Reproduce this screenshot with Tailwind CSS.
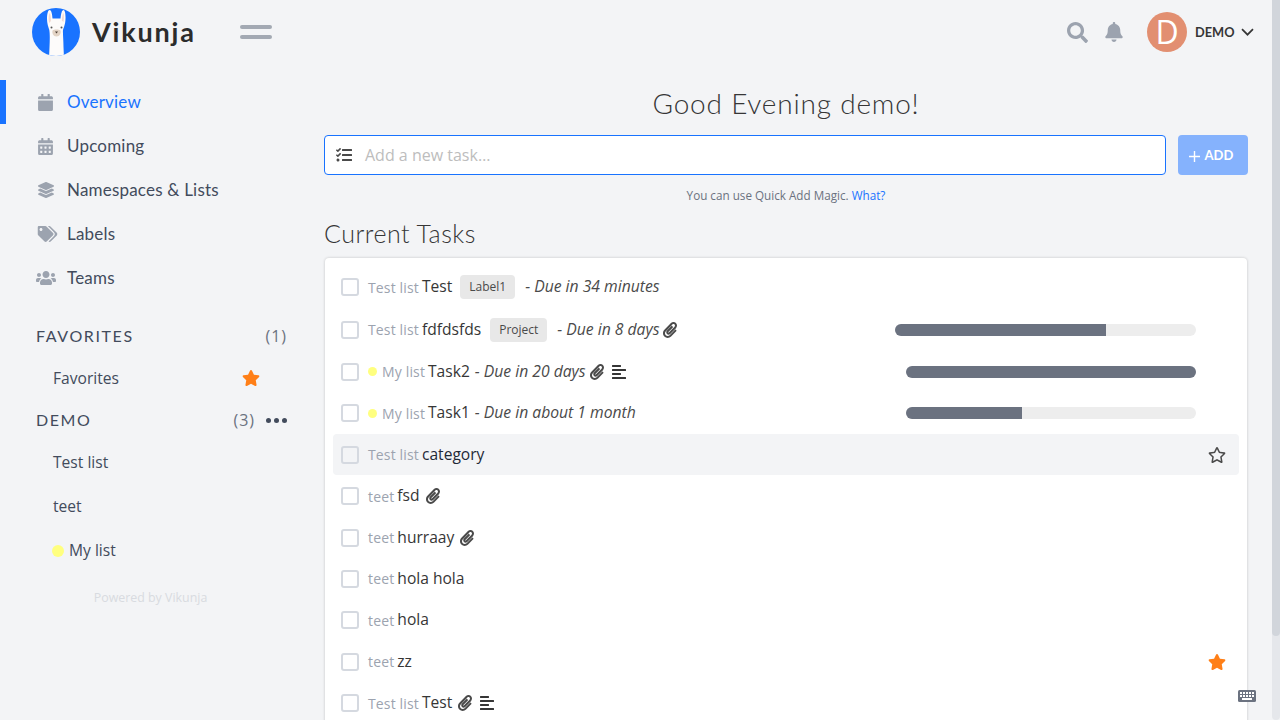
<!DOCTYPE html>
<html lang="en">
  <head>
    <meta charset="UTF-8" />
    <meta name="viewport" content="width=device-width, initial-scale=1.0" />
    <title>Overview - Vikunja</title>
    <script src="https://cdn.jsdelivr.net/npm/@tailwindcss/browser@4"></script>
  </head>
  <body class="bg-[#f3f4f6] font-['Open_Sans',sans-serif] text-[#363636] overflow-hidden">
    <div class="relative flex h-[720px] w-[1280px] overflow-hidden">
      <!-- Sidebar -->
      <aside class="w-[324px] shrink-0">
        <div class="flex h-16 items-center">
          <svg class="ml-8 h-12 w-12" viewBox="0 0 48 48">
            <defs><clipPath id="logoClip"><circle cx="24" cy="24" r="24" /></clipPath></defs>
            <circle cx="24" cy="24" r="24" fill="#1973ff" />
            <g clip-path="url(#logoClip)">
              <g transform="translate(1 0)">
                <path fill="#fdfbfa" d="M16.5 2c1.8 0 2.6 3 3 8.5h8c.6-5 1.300-8.500 3-8.500 1.900 0 2.600 7 1.600 13-.6 3-1.600 5-2.100 7-.3 3 .5 10 .5 17l.5 11H16l.5-11c.3-6 .500-13-.2-17-1-3-2.300-7-2.300-11 0-5 1-9 2.500-9z" />
                <path fill="#f0d9d3" d="M16.700 5c.8 1 1.200 4 1.200 8l-1.700 2c-.8-3-.8-8 .5-10zM30.300 5c.8 2 .8 6 .1 9l-1.600-1.500c.2-3 .7-6 1.500-7.500z" />
                <path fill="#e3d3c4" d="M19.500 22.500c2-1.200 6-1.200 8 0 .6 2.500-.6 6-4 6s-4.600-3.500-4-6z" />
                <circle cx="18.500" cy="19.500" r="1" fill="#555" />
                <circle cx="28.500" cy="19.500" r="1" fill="#555" />
                <path fill="#4a3b32" d="M22 23.500h3l-1.500 2z" />
              </g>
            </g>
          </svg>
          <span class="ml-3 font-['Lato',sans-serif] text-[27px] font-bold tracking-[1.8px] text-[#2c2c2c]">Vikunja</span>
          <button class="ml-[44px] flex h-[14px] w-8 flex-col justify-between">
            <span class="h-1 w-8 rounded-full bg-[#a3a9b3]"></span>
            <span class="h-1 w-8 rounded-full bg-[#a3a9b3]"></span>
          </button>
        </div>

        <nav class="mt-4 font-['Lato',sans-serif] text-[17px] tracking-[0.2px] text-[#424b5c]">
          <a class="flex h-11 items-center border-l-[6px] border-[#1973ff] pl-8 text-[#1973ff]">
            <span class="flex w-[29px]"><svg class="h-[17px] w-[15px] fill-[#9ca3af]" viewBox="0 0 448 512"><path d="M12 192h424c6.600 0 12 5.400 12 12v260c0 26.500-21.500 48-48 48H48c-26.500 0-48-21.500-48-48V204c0-6.600 5.400-12 12-12zm436-44v-36c0-26.500-21.500-48-48-48h-48V12c0-6.600-5.400-12-12-12h-40c-6.600 0-12 5.400-12 12v52H160V12c0-6.600-5.400-12-12-12h-40c-6.600 0-12 5.400-12 12v52H48C21.500 64 0 85.500 0 112v36c0 6.600 5.400 12 12 12h424c6.600 0 12-5.400 12-12z" /></svg></span>
            Overview
          </a>
          <a class="flex h-11 items-center pl-[38px]">
            <span class="flex w-[29px]"><svg class="h-[17px] w-[15px] fill-[#9ca3af]" viewBox="0 0 448 512"><path d="M0 464c0 26.500 21.500 48 48 48h352c26.500 0 48-21.500 48-48V192H0v272zm320-196c0-6.600 5.400-12 12-12h40c6.600 0 12 5.400 12 12v40c0 6.600-5.400 12-12 12h-40c-6.600 0-12-5.400-12-12v-40zm0 128c0-6.600 5.400-12 12-12h40c6.600 0 12 5.400 12 12v40c0 6.600-5.400 12-12 12h-40c-6.600 0-12-5.400-12-12v-40zM192 268c0-6.600 5.400-12 12-12h40c6.600 0 12 5.400 12 12v40c0 6.600-5.400 12-12 12h-40c-6.600 0-12-5.400-12-12v-40zm0 128c0-6.600 5.400-12 12-12h40c6.600 0 12 5.400 12 12v40c0 6.600-5.400 12-12 12h-40c-6.600 0-12-5.400-12-12v-40zM64 268c0-6.600 5.400-12 12-12h40c6.600 0 12 5.400 12 12v40c0 6.600-5.400 12-12 12H76c-6.600 0-12-5.400-12-12v-40zm0 128c0-6.600 5.400-12 12-12h40c6.600 0 12 5.400 12 12v40c0 6.600-5.400 12-12 12H76c-6.600 0-12-5.400-12-12v-40zM400 64h-48V16c0-8.800-7.200-16-16-16h-32c-8.800 0-16 7.200-16 16v48H160V16c0-8.800-7.200-16-16-16h-32c-8.800 0-16 7.200-16 16v48H48C21.500 64 0 85.500 0 112v48h448v-48c0-26.500-21.500-48-48-48z" /></svg></span>
            Upcoming
          </a>
          <a class="flex h-11 items-center pl-[38px]">
            <span class="flex w-[29px]"><svg class="h-4 w-4 fill-[#9ca3af]" viewBox="0 0 512 512"><path d="M12.410 148.020l232.940 105.670c6.800 3.090 14.490 3.090 21.290 0l232.940-105.670c16.550-7.510 16.550-32.520 0-40.030L266.650 2.310a25.607 25.607 0 0 0-21.290 0L12.410 107.980c-16.550 7.510-16.550 32.530 0 40.040zm487.180 88.280l-58.090-26.330-161.640 73.270c-7.560 3.430-15.590 5.170-23.860 5.170s-16.290-1.740-23.860-5.170L70.510 209.970l-58.100 26.330c-16.550 7.500-16.550 32.500 0 40l232.940 105.590c6.800 3.080 14.490 3.080 21.290 0L499.590 276.300c16.550-7.500 16.550-32.500 0-40zm0 127.800l-57.870-26.230-161.860 73.370c-7.560 3.430-15.590 5.170-23.860 5.170s-16.290-1.740-23.860-5.170L70.290 337.870 12.410 364.100c-16.550 7.500-16.550 32.500 0 40l232.940 105.590c6.800 3.080 14.490 3.080 21.290 0L499.590 404.100c16.550-7.500 16.550-32.500 0-40z" /></svg></span>
            Namespaces &amp; Lists
          </a>
          <a class="flex h-11 items-center pl-[38px]">
            <span class="flex w-[29px]"><svg class="h-4 w-5 -translate-x-[0.5px] fill-[#9ca3af]" viewBox="0 0 640 512"><path d="M497.941 225.941L286.059 14.059A48 48 0 0 0 252.118 0H48C21.490 0 0 21.490 0 48v204.118a48 48 0 0 0 14.059 33.941l211.882 211.882c18.744 18.745 49.136 18.746 67.882 0l204.118-204.118c18.745-18.745 18.745-49.137 0-67.882zM112 160c-26.510 0-48-21.490-48-48s21.490-48 48-48 48 21.490 48 48-21.490 48-48 48zm513.941 133.823L421.823 497.941c-18.745 18.745-49.137 18.745-67.882 0l-.360-.360L527.640 323.522c16.999-16.999 26.360-39.600 26.360-63.640s-9.362-46.641-26.360-63.640L331.397 0h48.721a48 48 0 0 1 33.941 14.059l211.882 211.882c18.745 18.745 18.745 49.137 0 67.882z" /></svg></span>
            Labels
          </a>
          <a class="flex h-11 items-center pl-[36px]">
            <span class="flex w-[31px]"><svg class="h-4 w-5 fill-[#9ca3af]" viewBox="0 0 640 512"><path d="M96 224c35.300 0 64-28.700 64-64s-28.700-64-64-64-64 28.700-64 64 28.700 64 64 64zm448 0c35.300 0 64-28.700 64-64s-28.700-64-64-64-64 28.700-64 64 28.700 64 64 64zm32 32h-64c-17.600 0-33.500 7.100-45.100 18.600 40.300 22.100 68.900 62 75.100 109.400h66c17.700 0 32-14.300 32-32v-32c0-35.300-28.700-64-64-64zm-256 0c61.900 0 112-50.100 112-112S381.900 32 320 32 208 82.100 208 144s50.100 112 112 112zm76.800 32h-8.300c-20.800 10-43.900 16-68.500 16s-47.600-6-68.500-16h-8.300C179.600 288 128 339.600 128 403.200V432c0 26.500 21.500 48 48 48h288c26.500 0 48-21.500 48-48v-28.800c0-63.600-51.600-115.200-115.200-115.200zm-223.700-13.400C161.500 263.100 145.600 256 128 256H64c-35.300 0-64 28.700-64 64v32c0 17.700 14.300 32 32 32h65.900c6.300-47.400 34.900-87.300 75.200-109.400z" /></svg></span>
            Teams
          </a>
        </nav>

        <div class="mt-[14px] w-[300px] pl-9 pr-[13px] text-[15.6px] text-[#424b5c]">
          <div class="flex h-11 items-center justify-between">
            <span class="font-['Lato',sans-serif] text-[16px] tracking-[1.6px]">FAVORITES</span>
            <span class="text-[16px] tracking-[1px] text-[#6b7280]">(1)</span>
          </div>
          <div class="flex h-10 items-center justify-between pl-[17px] pr-[27px]">
            <span class="mt-[2px]">Favorites</span>
            <svg class="h-4 w-[18px] fill-[#ff7f17]" viewBox="0 0 576 512"><path d="M259.300 17.800L194 150.200 47.900 171.500c-26.200 3.800-36.700 36.100-17.700 54.600l105.700 103-25 145.500c-4.500 26.300 23.200 46 46.400 33.700L288 439.600l130.700 68.700c23.200 12.200 50.900-7.400 46.400-33.700l-25-145.500 105.700-103c19-18.500 8.500-50.800-17.700-54.600L382 150.200 316.700 17.800c-11.700-23.600-45.600-23.900-57.400 0z" /></svg>
          </div>
          <div class="flex h-[42px] items-center justify-between pt-[2px]">
            <span class="font-['Lato',sans-serif] text-[16px] tracking-[1.6px]">DEMO</span>
            <span class="flex items-center gap-[11px]">
              <span class="text-[16px] tracking-[1px] text-[#6b7280]">(3)</span>
              <span class="flex gap-[3px]">
                <i class="h-[5px] w-[5px] rounded-full bg-[#424b5c]"></i>
                <i class="h-[5px] w-[5px] rounded-full bg-[#424b5c]"></i>
                <i class="h-[5px] w-[5px] rounded-full bg-[#424b5c]"></i>
              </span>
            </span>
          </div>
          <div class="flex h-11 items-center pt-[2px] pl-[17px]">Test list</div>
          <div class="flex h-11 items-center pt-[2px] pl-[17px]">teet</div>
          <div class="flex h-11 items-center pt-[2px] pl-4">
            <i class="mr-[5px] h-3 w-3 rounded-full bg-[#ffff7f]"></i>My list
          </div>
          <p class="mt-[17px] pr-[22px] text-center text-[12.400px] text-[#d8dbe0]">Powered by Vikunja</p>
        </div>
      </aside>

      <!-- Main -->
      <main class="w-[924px] shrink-0">
        <div class="-mr-8 flex h-16 items-center justify-end">
          <svg class="mr-[17px] h-[21px] w-[21px] fill-[#9ca3af]" viewBox="0 0 512 512"><path d="M505 442.700L405.300 343c-4.500-4.500-10.600-7-17-7H372c27.600-35.300 44-79.700 44-128C416 93.100 322.900 0 208 0S0 93.100 0 208s93.100 208 208 208c48.300 0 92.700-16.400 128-44v16.300c0 6.400 2.500 12.500 7 17l99.700 99.700c9.400 9.400 24.600 9.400 33.900 0l28.300-28.300c9.400-9.400 9.400-24.600.1-34zM208 336c-70.700 0-128-57.200-128-128 0-70.700 57.200-128 128-128 70.700 0 128 57.200 128 128 0 70.700-57.200 128-128 128z" /></svg>
          <svg class="mr-[24px] h-[20px] w-[18px] fill-[#9ca3af]" viewBox="0 0 448 512"><path d="M224 512c35.320 0 63.970-28.650 63.970-64H160.030c0 35.350 28.650 64 63.970 64zm215.390-149.710c-19.320-20.760-55.470-51.990-55.470-154.290 0-77.700-54.480-139.900-127.940-155.160V32c0-17.670-14.320-32-31.980-32s-31.980 14.330-31.980 32v20.840C118.560 68.100 64.080 130.300 64.080 208c0 102.300-36.150 133.530-55.470 154.290-6 6.450-8.660 14.160-8.610 21.710.11 16.400 12.980 32 32.100 32h383.800c19.120 0 32-15.600 32.100-32 .05-7.550-2.610-15.270-8.610-21.710z" /></svg>
          <div class="flex h-10 w-10 items-center justify-center rounded-full bg-[#e28f71] font-['Open_Sans',sans-serif] text-[32px] leading-none text-white">D</div>
          <span class="mt-[2px] ml-2 w-[39px] font-['Lato',sans-serif] text-[12.800px] font-bold text-[#363636]">DEMO</span>
          <svg class="ml-[7px] h-[8px] w-[13px] fill-none stroke-[#363636] stroke-[1.700]" viewBox="0 0 13 8"><path d="M1 1.200l5.500 5.500 5.500-5.500" /></svg>
          <span class="w-[26px]"></span>
        </div>

        <div class="w-[924px]">
          <h2 class="mt-[23px] text-center font-['Lato',sans-serif] text-[28px] leading-8 font-light tracking-[0.8px] text-[#363636]">Good Evening demo!</h2>
          <div class="mt-4 flex gap-3">
            <div class="flex h-10 flex-1 items-center rounded border border-[#1973ff] bg-white">
              <svg class="ml-[11px] h-4 w-4 fill-[#4a4a4a]" viewBox="0 0 512 512"><path d="M139.610 35.500a12 12 0 0 0-17 0L58.930 98.810l-22.700-22.120a12 12 0 0 0-17 0L3.530 92.410a12 12 0 0 0 0 17l47.590 47.400a12.780 12.780 0 0 0 17.610 0l15.590-15.620L156.520 69a12.090 12.090 0 0 0 .09-17zm0 159.190a12 12 0 0 0-17 0l-63.680 63.720-22.700-22.100a12 12 0 0 0-17 0L3.530 252a12 12 0 0 0 0 17L51 316.500a12.770 12.770 0 0 0 17.600 0l15.700-15.690 72.200-72.220a12 12 0 0 0 .09-16.900zM64 368c-26.490 0-48.590 21.500-48.590 48S37.530 464 64 464a48 48 0 0 0 0-96zm432 16H208a16 16 0 0 0-16 16v32a16 16 0 0 0 16 16h288a16 16 0 0 0 16-16v-32a16 16 0 0 0-16-16zm0-320H208a16 16 0 0 0-16 16v32a16 16 0 0 0 16 16h288a16 16 0 0 0 16-16V80a16 16 0 0 0-16-16zm0 160H208a16 16 0 0 0-16 16v32a16 16 0 0 0 16 16h288a16 16 0 0 0 16-16v-32a16 16 0 0 0-16-16z" /></svg>
              <span class="ml-[13px] text-[16px] text-[#bdbdbd]">Add a new task…</span>
            </div>
            <button class="flex h-10 w-[70px] items-center justify-center rounded bg-[#85b2fd] pt-[2px] pr-1 font-['Lato',sans-serif] text-[13px] font-bold text-white">
              <svg class="mr-[5px] h-[11px] w-[11px] stroke-white stroke-[1.400]" viewBox="0 0 11 11"><path d="M5.500 0v11M0 5.500h11" /></svg>ADD
            </button>
          </div>
          <p class="mt-3 text-center text-[11.700px] leading-[17px] text-[#6b7280]">You can use Quick Add Magic. <span class="text-[#1973ff]">What?</span></p>

          <h3 class="mt-[13px] font-['Lato',sans-serif] text-[25px] leading-8 font-light tracking-[0.5px] text-[#363636]">Current Tasks</h3>

          <div class="mx-px mt-[9px] h-[470px] rounded-t bg-white px-2 pt-2 text-[15.600px] shadow-[0_0_3px_rgba(0,0,0,0.2)]">
            <div class="flex h-[42px] items-center pl-2">
              <i class="mr-[9px] h-[18px] w-[18px] rounded-[3px] border-2 border-[#d5d9e0]"></i>
              <span class="mr-[3px] text-[14px] tracking-[0.15px] text-[#9ca3af]">Test list</span>Test
              <span class="ml-2 rounded bg-[#e8e8e8] px-[9px] py-[3px] text-[12px] leading-[18px] text-[#4a4a4a]">Label1</span>
              <em class="ml-[10px] text-[15.700px] text-[#4a4a4a]">- Due in 34 minutes</em>
            </div>
            <div class="flex h-[43px] items-center pl-2">
              <i class="mr-[9px] h-[18px] w-[18px] rounded-[3px] border-2 border-[#d5d9e0]"></i>
              <span class="mr-[3px] text-[14px] tracking-[0.15px] text-[#9ca3af]">Test list</span>fdfdsfds
              <span class="ml-[9px] rounded bg-[#e8e8e8] px-[9px] py-[3px] text-[12px] leading-[18px] text-[#4a4a4a]">Project</span>
              <em class="ml-[10px] text-[15.700px] text-[#4a4a4a]">- Due in 8 days</em>
              <svg class="ml-1 h-4 w-[14px] fill-[#4a4a4a]" viewBox="0 0 448 512"><path d="M43.246 466.142c-58.430-60.289-57.341-157.511 1.386-217.581L254.392 34c44.316-45.332 116.351-45.336 160.671 0 43.890 44.894 43.943 117.329 0 162.276L232.214 383.128c-29.855 30.537-78.633 30.111-107.982-.998-28.275-29.970-27.368-77.473 1.452-106.953l143.743-146.835c6.182-6.314 16.312-6.422 22.626-.241l22.861 22.379c6.315 6.182 6.422 16.312.241 22.626L171.427 319.927c-4.932 5.045-5.236 13.428-.648 18.292 4.372 4.634 11.245 4.711 15.688.165l182.849-186.851c19.613-20.062 19.613-52.725-.011-72.798-19.189-19.627-49.957-19.637-69.154 0L90.390 293.295c-34.763 35.560-35.299 93.120-1.191 128.313 34.010 35.093 88.985 35.137 123.058.286l172.060-175.999c6.177-6.319 16.307-6.433 22.626-.256l22.877 22.364c6.319 6.177 6.434 16.307.256 22.626l-172.060 175.998c-59.576 60.938-155.943 60.216-214.770-.485z" /></svg>
              <div class="mr-[43px] ml-auto h-3 w-[301px] overflow-hidden rounded-full bg-[#ededed]"><div class="h-full bg-[#6b7280]" style="width: 70%"></div></div>
            </div>
            <div class="flex h-[41px] items-center pl-2">
              <i class="mr-[9px] h-[18px] w-[18px] rounded-[3px] border-2 border-[#d5d9e0]"></i>
              <i class="mr-[5px] h-[9px] w-[9px] rounded-full bg-[#ffff7f]"></i>
              <span class="mr-[3px] text-[14px] tracking-[0.15px] text-[#9ca3af]">My list</span>Task2
              <em class="ml-[5px] text-[15.700px] text-[#4a4a4a]">- Due in 20 days</em>
              <svg class="ml-1 h-4 w-[14px] fill-[#4a4a4a]" viewBox="0 0 448 512"><path d="M43.246 466.142c-58.430-60.289-57.341-157.511 1.386-217.581L254.392 34c44.316-45.332 116.351-45.336 160.671 0 43.890 44.894 43.943 117.329 0 162.276L232.214 383.128c-29.855 30.537-78.633 30.111-107.982-.998-28.275-29.970-27.368-77.473 1.452-106.953l143.743-146.835c6.182-6.314 16.312-6.422 22.626-.241l22.861 22.379c6.315 6.182 6.422 16.312.241 22.626L171.427 319.927c-4.932 5.045-5.236 13.428-.648 18.292 4.372 4.634 11.245 4.711 15.688.165l182.849-186.851c19.613-20.062 19.613-52.725-.011-72.798-19.189-19.627-49.957-19.637-69.154 0L90.390 293.295c-34.763 35.560-35.299 93.120-1.191 128.313 34.010 35.093 88.985 35.137 123.058.286l172.060-175.999c6.177-6.319 16.307-6.433 22.626-.256l22.877 22.364c6.319 6.177 6.434 16.307.256 22.626l-172.060 175.998c-59.576 60.938-155.943 60.216-214.770-.485z" /></svg>
              <svg class="ml-2 h-4 w-[14px] fill-[#363636]" viewBox="0 0 448 512"><path d="M12.830 352h262.340A12.820 12.820 0 0 0 288 339.170v-38.340A12.820 12.820 0 0 0 275.170 288H12.830A12.820 12.820 0 0 0 0 300.830v38.340A12.820 12.820 0 0 0 12.830 352zm0-256h262.340A12.820 12.820 0 0 0 288 83.170V44.830A12.820 12.820 0 0 0 275.170 32H12.830A12.820 12.820 0 0 0 0 44.830v38.340A12.820 12.820 0 0 0 12.830 96zM432 160H16a16 16 0 0 0-16 16v32a16 16 0 0 0 16 16h416a16 16 0 0 0 16-16v-32a16 16 0 0 0-16-16zm0 256H16a16 16 0 0 0-16 16v32a16 16 0 0 0 16 16h416a16 16 0 0 0 16-16v-32a16 16 0 0 0-16-16z" /></svg>
              <div class="mr-[43px] ml-auto h-3 w-[290px] overflow-hidden rounded-full bg-[#ededed]"><div class="h-full bg-[#6b7280]" style="width: 100%"></div></div>
            </div>
            <div class="flex h-[42px] items-center pl-2">
              <i class="mr-[9px] h-[18px] w-[18px] rounded-[3px] border-2 border-[#d5d9e0]"></i>
              <i class="mr-[5px] h-[9px] w-[9px] rounded-full bg-[#ffff7f]"></i>
              <span class="mr-[3px] text-[14px] tracking-[0.15px] text-[#9ca3af]">My list</span>Task1
              <em class="ml-[5px] text-[15.700px] text-[#4a4a4a]">- Due in about 1 month</em>
              <div class="mr-[43px] ml-auto h-3 w-[290px] overflow-hidden rounded-full bg-[#ededed]"><div class="h-full bg-[#6b7280]" style="width: 40%"></div></div>
            </div>
            <div class="flex h-[41px] items-center rounded bg-[#f3f4f6] pl-2 text-[#1f2937]">
              <i class="mr-[9px] h-[18px] w-[18px] rounded-[3px] border-2 border-[#d5d9e0]"></i>
              <span class="mr-[3px] text-[14px] tracking-[0.15px] text-[#9ca3af]">Test list</span>category
              <svg class="mr-[13px] ml-auto h-4 w-[18px] fill-[#4a4a4a]" viewBox="0 0 576 512"><path d="M528.100 171.500L382 150.200 316.700 17.800c-11.700-23.600-45.600-23.900-57.400 0L194 150.200 47.900 171.500c-26.200 3.800-36.700 36.100-17.700 54.600l105.700 103-25 145.500c-4.500 26.300 23.200 46 46.400 33.700L288 439.600l130.700 68.700c23.200 12.200 50.900-7.400 46.400-33.700l-25-145.500 105.700-103c19-18.500 8.500-50.800-17.700-54.600zM388.600 312.300l23.700 138.400L288 385.400l-124.300 65.300 23.700-138.400-100.600-98 139-20.200 62.200-126 62.200 126 139 20.200-100.600 98z" /></svg>
            </div>
            <div class="flex h-[42px] items-center pl-2">
              <i class="mr-[9px] h-[18px] w-[18px] rounded-[3px] border-2 border-[#d5d9e0]"></i>
              <span class="mr-[3px] text-[14px] tracking-[0.15px] text-[#9ca3af]">teet</span>fsd
              <svg class="ml-[6px] h-4 w-[14px] fill-[#4a4a4a]" viewBox="0 0 448 512"><path d="M43.246 466.142c-58.430-60.289-57.341-157.511 1.386-217.581L254.392 34c44.316-45.332 116.351-45.336 160.671 0 43.890 44.894 43.943 117.329 0 162.276L232.214 383.128c-29.855 30.537-78.633 30.111-107.982-.998-28.275-29.970-27.368-77.473 1.452-106.953l143.743-146.835c6.182-6.314 16.312-6.422 22.626-.241l22.861 22.379c6.315 6.182 6.422 16.312.241 22.626L171.427 319.927c-4.932 5.045-5.236 13.428-.648 18.292 4.372 4.634 11.245 4.711 15.688.165l182.849-186.851c19.613-20.062 19.613-52.725-.011-72.798-19.189-19.627-49.957-19.637-69.154 0L90.390 293.295c-34.763 35.560-35.299 93.120-1.191 128.313 34.010 35.093 88.985 35.137 123.058.286l172.060-175.999c6.177-6.319 16.307-6.433 22.626-.256l22.877 22.364c6.319 6.177 6.434 16.307.256 22.626l-172.060 175.998c-59.576 60.938-155.943 60.216-214.770-.485z" /></svg>
            </div>
            <div class="flex h-[41px] items-center pl-2">
              <i class="mr-[9px] h-[18px] w-[18px] rounded-[3px] border-2 border-[#d5d9e0]"></i>
              <span class="mr-[3px] text-[14px] tracking-[0.15px] text-[#9ca3af]">teet</span>hurraay
              <svg class="ml-[6px] h-4 w-[14px] fill-[#4a4a4a]" viewBox="0 0 448 512"><path d="M43.246 466.142c-58.430-60.289-57.341-157.511 1.386-217.581L254.392 34c44.316-45.332 116.351-45.336 160.671 0 43.890 44.894 43.943 117.329 0 162.276L232.214 383.128c-29.855 30.537-78.633 30.111-107.982-.998-28.275-29.970-27.368-77.473 1.452-106.953l143.743-146.835c6.182-6.314 16.312-6.422 22.626-.241l22.861 22.379c6.315 6.182 6.422 16.312.241 22.626L171.427 319.927c-4.932 5.045-5.236 13.428-.648 18.292 4.372 4.634 11.245 4.711 15.688.165l182.849-186.851c19.613-20.062 19.613-52.725-.011-72.798-19.189-19.627-49.957-19.637-69.154 0L90.390 293.295c-34.763 35.560-35.299 93.120-1.191 128.313 34.010 35.093 88.985 35.137 123.058.286l172.060-175.999c6.177-6.319 16.307-6.433 22.626-.256l22.877 22.364c6.319 6.177 6.434 16.307.256 22.626l-172.060 175.998c-59.576 60.938-155.943 60.216-214.770-.485z" /></svg>
            </div>
            <div class="flex h-[41px] items-center pl-2">
              <i class="mr-[9px] h-[18px] w-[18px] rounded-[3px] border-2 border-[#d5d9e0]"></i>
              <span class="mr-[3px] text-[14px] tracking-[0.15px] text-[#9ca3af]">teet</span>hola hola
            </div>
            <div class="flex h-[42px] items-center pl-2">
              <i class="mr-[9px] h-[18px] w-[18px] rounded-[3px] border-2 border-[#d5d9e0]"></i>
              <span class="mr-[3px] text-[14px] tracking-[0.15px] text-[#9ca3af]">teet</span>hola
            </div>
            <div class="flex h-[41px] items-center pl-2">
              <i class="mr-[9px] h-[18px] w-[18px] rounded-[3px] border-2 border-[#d5d9e0]"></i>
              <span class="mr-[3px] text-[14px] tracking-[0.15px] text-[#9ca3af]">teet</span>zz
              <svg class="mr-[13px] ml-auto h-4 w-[18px] fill-[#ff7f17]" viewBox="0 0 576 512"><path d="M259.300 17.800L194 150.200 47.900 171.500c-26.200 3.800-36.700 36.100-17.700 54.600l105.700 103-25 145.500c-4.500 26.300 23.200 46 46.400 33.700L288 439.600l130.700 68.700c23.200 12.200 50.900-7.400 46.400-33.700l-25-145.500 105.700-103c19-18.500 8.500-50.800-17.700-54.600L382 150.200 316.700 17.800c-11.700-23.600-45.600-23.900-57.400 0z" /></svg>
            </div>
            <div class="flex h-[42px] items-center pl-2">
              <i class="mr-[9px] h-[18px] w-[18px] rounded-[3px] border-2 border-[#d5d9e0]"></i>
              <span class="mr-[3px] text-[14px] tracking-[0.15px] text-[#9ca3af]">Test list</span>Test
              <svg class="ml-[6px] h-4 w-[14px] fill-[#4a4a4a]" viewBox="0 0 448 512"><path d="M43.246 466.142c-58.430-60.289-57.341-157.511 1.386-217.581L254.392 34c44.316-45.332 116.351-45.336 160.671 0 43.890 44.894 43.943 117.329 0 162.276L232.214 383.128c-29.855 30.537-78.633 30.111-107.982-.998-28.275-29.970-27.368-77.473 1.452-106.953l143.743-146.835c6.182-6.314 16.312-6.422 22.626-.241l22.861 22.379c6.315 6.182 6.422 16.312.241 22.626L171.427 319.927c-4.932 5.045-5.236 13.428-.648 18.292 4.372 4.634 11.245 4.711 15.688.165l182.849-186.851c19.613-20.062 19.613-52.725-.011-72.798-19.189-19.627-49.957-19.637-69.154 0L90.390 293.295c-34.763 35.560-35.299 93.120-1.191 128.313 34.010 35.093 88.985 35.137 123.058.286l172.060-175.999c6.177-6.319 16.307-6.433 22.626-.256l22.877 22.364c6.319 6.177 6.434 16.307.256 22.626l-172.060 175.998c-59.576 60.938-155.943 60.216-214.770-.485z" /></svg>
              <svg class="ml-2 h-4 w-[14px] fill-[#363636]" viewBox="0 0 448 512"><path d="M12.830 352h262.340A12.820 12.820 0 0 0 288 339.170v-38.340A12.820 12.820 0 0 0 275.170 288H12.830A12.820 12.820 0 0 0 0 300.830v38.340A12.820 12.820 0 0 0 12.830 352zm0-256h262.340A12.820 12.820 0 0 0 288 83.170V44.830A12.820 12.820 0 0 0 275.170 32H12.830A12.820 12.820 0 0 0 0 44.830v38.340A12.820 12.820 0 0 0 12.830 96zM432 160H16a16 16 0 0 0-16 16v32a16 16 0 0 0 16 16h416a16 16 0 0 0 16-16v-32a16 16 0 0 0-16-16zm0 256H16a16 16 0 0 0-16 16v32a16 16 0 0 0 16 16h416a16 16 0 0 0 16-16v-32a16 16 0 0 0-16-16z" /></svg>
            </div>
          </div>
        </div>
      </main>

      <!-- Scrollbar -->
      <div class="ml-auto h-full w-2 rounded-b-full bg-[#e5e7eb]">
        <div class="h-[636px] rounded-b-full bg-[#d1d5db]"></div>
      </div>

      <!-- Keyboard shortcuts button -->
      <svg class="absolute top-[689px] left-[1238px] h-[14px] w-[18px] fill-[#6b7280]" viewBox="0 0 18 14">
        <rect y="1" width="18" height="12" rx="1.500" />
        <path fill="#fff" d="M2 3h2v2H2zM5 3h2v2H5zM8 3h2v2H8zM11 3h2v2h-2zM14 3h2v2h-2zM2 6h2v2H2zM5 6h2v2H5zM8 6h2v2H8zM11 6h2v2h-2zM14 6h2v2h-2zM4 9h10v2H4z" />
      </svg>
    </div>
  </body>
</html>
